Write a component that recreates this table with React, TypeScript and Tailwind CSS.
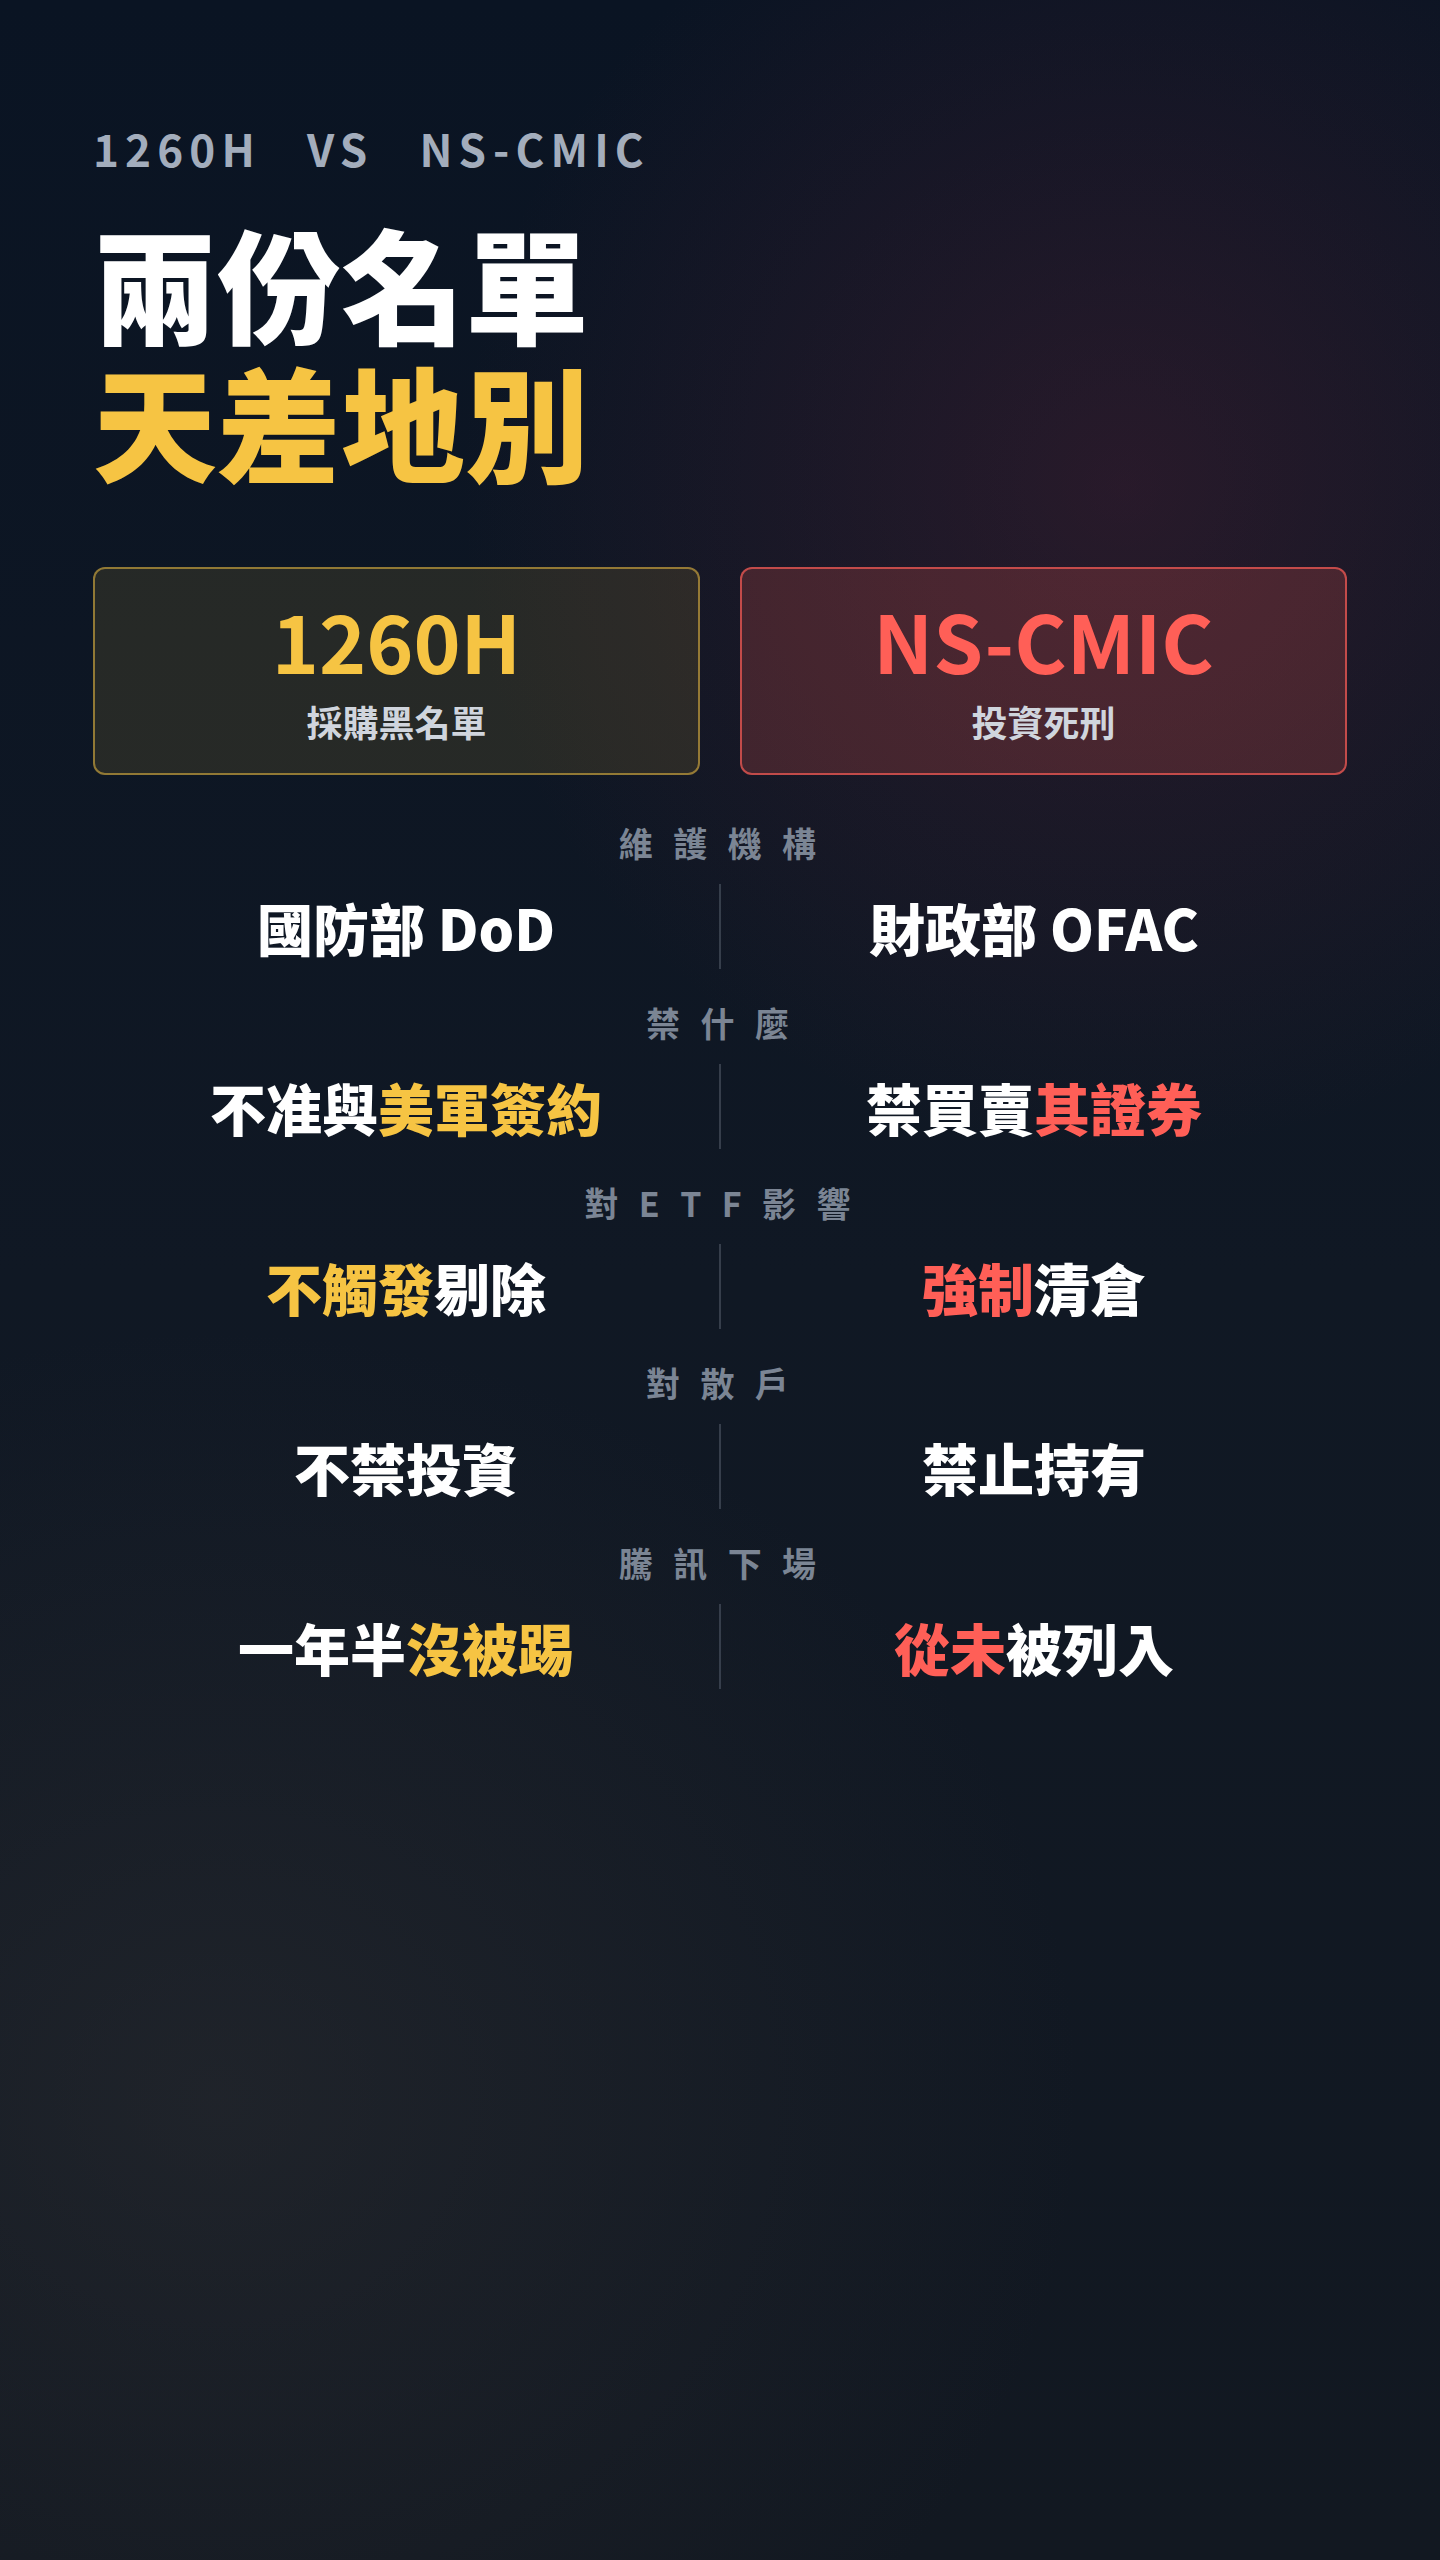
import React from "react";

const Y = "text-[#f6c443]";
const R = "text-[#ff5f57]";

type Row = { label: string; left: React.ReactNode; right: React.ReactNode };

const rows: Row[] = [
  { label: "維護機構", left: <>國防部 DoD</>, right: <>財政部 OFAC</> },
  {
    label: "禁什麼",
    left: (
      <>
        不准與<span className={Y}>美軍簽約</span>
      </>
    ),
    right: (
      <>
        禁買賣<span className={R}>其證券</span>
      </>
    ),
  },
  {
    label: "對ETF影響",
    left: (
      <>
        <span className={Y}>不觸發</span>剔除
      </>
    ),
    right: (
      <>
        <span className={R}>強制</span>清倉
      </>
    ),
  },
  { label: "對散戶", left: <>不禁投資</>, right: <>禁止持有</> },
  {
    label: "騰訊下場",
    left: (
      <>
        一年半<span className={Y}>沒被踢</span>
      </>
    ),
    right: (
      <>
        <span className={R}>從未</span>被列入
      </>
    ),
  },
];

export default function App() {
  return (
    <div className="relative w-full h-[2560px] overflow-hidden font-['Noto_Sans_CJK_TC',sans-serif] bg-[radial-gradient(ellipse_46%_26%_at_78%_19%,rgba(105,36,58,0.30),transparent),radial-gradient(ellipse_60%_30%_at_15%_82%,rgba(52,52,54,0.40),transparent),linear-gradient(180deg,#0a1423_0%,#101824_50%,#121821_100%)]">
      <div className="px-[93px] pt-[122px]">
        <div className="flex gap-[46px] text-[44px] leading-[1.2] font-bold tracking-[0.14em] text-[#a3adbc]">
          <span>1260H</span>
          <span>VS</span>
          <span>NS-CMIC</span>
        </div>
        <h1 className="mt-[37px] text-[124px] leading-[138px] font-black">
          <div className="text-white">兩份名單</div>
          <div className="text-[#f6c443]">天差地別</div>
        </h1>

        <div className="mt-[79px] grid grid-cols-2 gap-[40px]">
          <div className="h-[208px] flex flex-col items-center justify-center gap-[21px] rounded-[12px] border-2 border-[rgba(246,196,67,0.52)] bg-[rgba(246,196,67,0.11)]">
            <div className="text-[80px] leading-none font-bold text-[#f6c443]">1260H</div>
            <div className="text-[36px] leading-[1.2] font-bold text-[#d0d5dd]">採購黑名單</div>
          </div>
          <div className="h-[208px] flex flex-col items-center justify-center gap-[21px] rounded-[12px] border-2 border-[rgba(255,95,87,0.68)] bg-[rgba(255,95,87,0.19)]">
            <div className="text-[80px] leading-none font-bold text-[#ff5f57]">NS-CMIC</div>
            <div className="text-[36px] leading-[1.2] font-bold text-[#d0d5dd]">投資死刑</div>
          </div>
        </div>

        <div className="mt-[48px] flex flex-col gap-[34px]">
          {rows.map((r) => (
            <div key={r.label} className="flex flex-col gap-[21px]">
              <div className="text-center text-[34px] leading-[40px] font-bold tracking-[0.6em] pl-[0.45em] text-[#7b8594]">
                {r.label}
              </div>
              <div className="grid grid-cols-[1fr_2px_1fr] h-[85px] items-center">
                <div className="text-center text-[56px] leading-[1.2] font-black text-white">{r.left}</div>
                <div className="h-full bg-[#363e4b]" />
                <div className="text-center text-[56px] leading-[1.2] font-black text-white">{r.right}</div>
              </div>
            </div>
          ))}
        </div>
      </div>
    </div>
  );
}
